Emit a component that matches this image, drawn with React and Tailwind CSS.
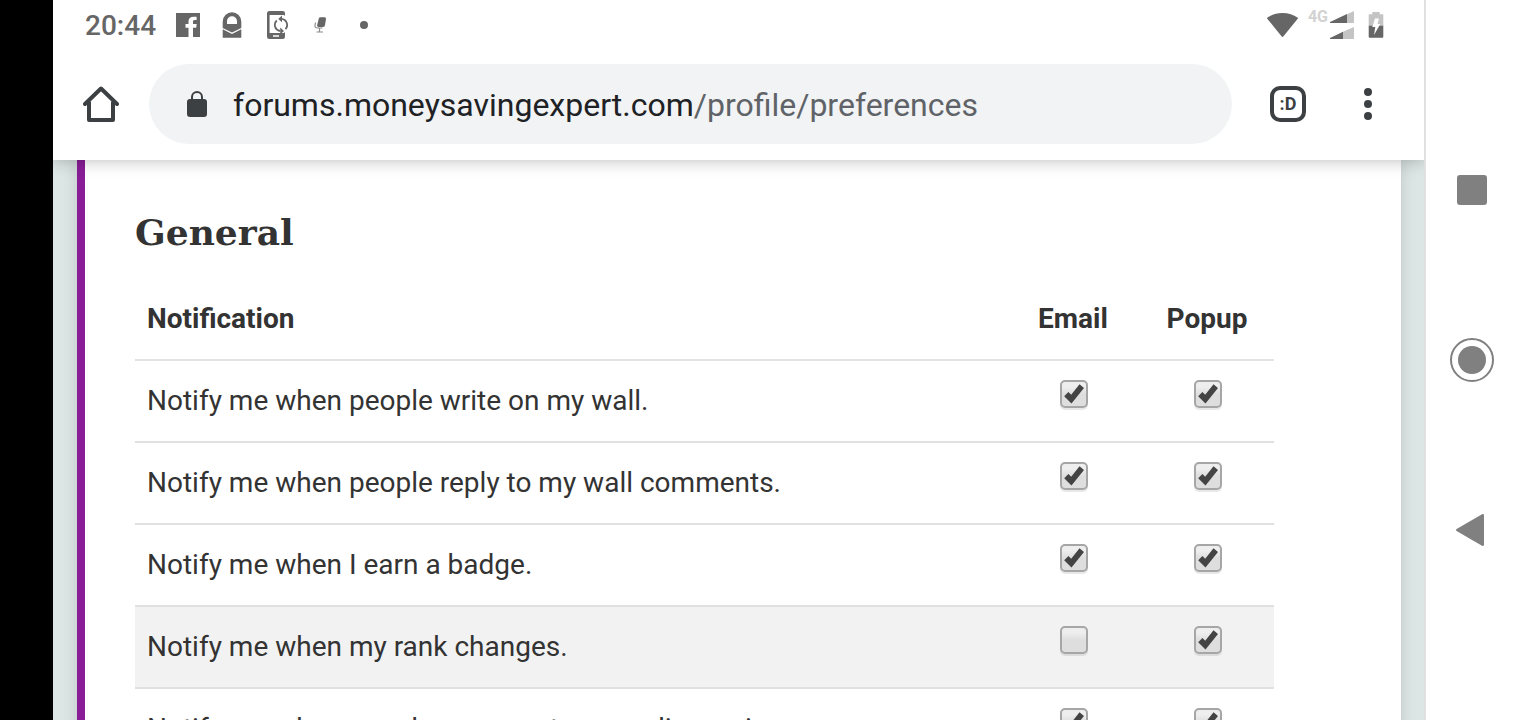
import { useState } from 'react';

const initialPreferences = [
    { id: 'wall-post', label: 'Notify me when people write on my wall.', email: true, popup: true },
    { id: 'wall-reply', label: 'Notify me when people reply to my wall comments.', email: true, popup: true },
    { id: 'badge', label: 'Notify me when I earn a badge.', email: true, popup: true },
    { id: 'rank', label: 'Notify me when my rank changes.', email: false, popup: true, highlighted: true },
    { id: 'discussion', label: 'Notify me when people comment on my discussions.', email: true, popup: true },
];

const StatusBar = () => (
    <div className="flex h-12 items-center justify-between pl-8 pr-9 text-[#666666]">
        <div className="flex items-center gap-5 pt-0.5">
            <span className="w-[71px] pt-0.5 text-[28px] leading-8 font-medium">20:44</span>

            {/* Facebook */}
            <svg className="h-6 w-6" viewBox="0 0 24 24" fill="currentColor">
                <path d="M0 0h24v24h-7v-9.200h3.200l.5-3.800H17V8.800c0-1.200.5-1.700 1.800-1.700h1.800V3.700h-2.800c-3.600 0-5.300 1.900-5.300 4.800V11H9.500v3.800h3V24H0z" />
            </svg>

            {/* Mail lock */}
            <svg className="h-[26px] w-6" viewBox="0 0 24 26" fill="currentColor">
                <path fillRule="evenodd" d="M2.700 9.500a9.300 9.300 0 0 1 18.600 0v6.500L12 20.500l-9.300-4.500zM7 12h10V9.300a5 5 0 0 0-10 0z" />
                <path d="M2.700 17.300l9.300 4.700 9.300-4.700v7.900q0 .6-.6.600H3.300q-.6 0-.6-.6z" />
            </svg>

            {/* Phone sync */}
            <svg className="h-7 w-6" viewBox="0 0 24 28" fill="none">
                <path fill="currentColor" fillRule="evenodd" d="M5.500 0h13A2.500 2.500 0 0 1 21 2.500V5l-1-1H5.600v18H20l1-1v4.500a2.500 2.500 0 0 1-2.500 2.500h-13A2.500 2.500 0 0 1 3 25.500v-23A2.500 2.500 0 0 1 5.500 0zM9 24.200v1.500h6v-1.500z" />
                <path stroke="currentColor" strokeWidth="1.800" d="M16 20A6.100 6.100 0 0 1 12.800 9.500M17.500 7.900a6.100 6.100 0 0 1 4 10.200" />
                <path fill="currentColor" d="M18 4.600v6.600L14.200 7.900zM16.200 16.600v6.600l3.800-3.300z" />
            </svg>

            {/* Microphone */}
            <svg className="h-4 w-6" viewBox="0 0 24 16" fill="none">
                <path fill="currentColor" d="M10.800 1.500Q11 .2 12.500.200h4.200q1.500 0 1.300 1.500l-1 6.600q-.3 1.700-2 1.700h-4.500q-1.700 0-1.400-1.700z" />
                <path stroke="currentColor" strokeWidth="1.200" d="M7.500 5.500l-.5 3q-.2 2.500 2.500 2.500h5M11.500 10.500V15M8.500 15h6.500" opacity=".75" />
            </svg>

            <span className="flex w-6 justify-center">
                <span className="h-2 w-2 rounded-full bg-[#666666]" />
            </span>
        </div>

        <div className="flex items-center gap-2.5 pt-0.5">
            {/* Wifi */}
            <svg className="h-6 w-[31px]" viewBox="0 0 31 24" fill="currentColor">
                <path d="M15.500 0C21.500 0 26.500 1.800 30.500 4.600q.7.500.2 1.200L16.300 23.500q-.8.900-1.600 0L.3 5.800q-.5-.7.2-1.200C4.500 1.800 9.500 0 15.500 0z" />
            </svg>

            {/* Mobile signal, one wedge for each SIM */}
            <div className="flex gap-0.5">
                <span className="text-[16px] leading-3 font-bold text-[#d2d2d2]">4G</span>
                <svg className="h-7 w-6" viewBox="0 0 24 28">
                    <path fill="#c4c4c4" d="M17 3.200L24 0v12h-7zM13 20.800L24 16v12H13z" />
                    <path fill="#666666" d="M0 11L17 3v9H0zM0 27l13-6.200V28H0z" />
                </svg>
            </div>

            {/* Battery */}
            <svg className="h-[26px] w-6" viewBox="0 0 24 26">
                <path fill="#c4c4c4" d="M8.300 0h7.400v2.300h2.800q.8 0 .8.800V14H4.700V3.100q0-.8.800-.8h2.800z" />
                <path fill="#666666" d="M4.700 13.800h14.600v11q0 1-1 1H5.700q-1 0-1-1z" />
                <path fill="#ffffff" d="M11 6.500h4l-1.500 5.500h2.800L10 23l1.300-8H8.300z" />
            </svg>
        </div>
    </div>
);

const BrowserToolbar = () => (
    <div className="flex items-center py-4 pl-[30px] pr-[52px] text-[#3c4043]">
        <button aria-label="Home" className="mr-[30px] h-9 w-9 shrink-0">
            <svg className="h-9 w-9" viewBox="0 0 36 36" fill="none" stroke="currentColor" strokeWidth="4">
                <path strokeLinecap="round" strokeLinejoin="round" d="M2 18L18 2.500 34 18" />
                <path strokeLinejoin="round" d="M6 15.500V34h24V15.500" />
            </svg>
        </button>

        <button className="flex h-20 min-w-0 flex-1 items-center gap-[26px] rounded-full bg-[#f1f3f4] pl-[38px] text-left">
            <svg className="h-[26px] w-5 shrink-0" viewBox="0 0 20 26" fill="none">
                <rect y="8" width="20" height="18" rx="3" fill="currentColor" />
                <path stroke="currentColor" strokeWidth="2" d="M5 9V6a5 5 0 0 1 10 0v3" />
            </svg>
            <span className="truncate pt-0.5 text-[32px] leading-10 text-[#202124]">
                forums.moneysavingexpert.com<span className="text-[#5f6368]">/profile/preferences</span>
            </span>
        </button>

        <button aria-label="Open tabs" className="ml-[38px] flex h-9 w-9 shrink-0 items-center justify-center rounded-[10px] border-4 border-[#3c4043] text-[18px] leading-5 font-bold">
            :D
        </button>

        <button aria-label="Menu" className="ml-[58px] flex shrink-0 flex-col gap-1">
            <span className="h-2 w-2 rounded-full bg-[#3c4043]" />
            <span className="h-2 w-2 rounded-full bg-[#3c4043]" />
            <span className="h-2 w-2 rounded-full bg-[#3c4043]" />
        </button>
    </div>
);

const PreferenceCheckbox = ({ label, checked, onChange }) => (
    <span className="relative mx-auto block h-7 w-7">
        <input
            type="checkbox"
            aria-label={label}
            checked={checked}
            onChange={onChange}
            className="peer block h-7 w-7 appearance-none rounded-[5px] border-2 border-[#a6a6a6] bg-linear-to-b from-[#eeeeee] from-20% to-[#dedede] to-50% shadow-[0_2px_0_rgba(0,0,0,0.09)]"
        />
        <svg className="pointer-events-none absolute inset-0 hidden h-7 w-7 peer-checked:block" viewBox="0 0 28 28" fill="#444444">
            <path d="M19.500 4.300l4.500 3.700L11.500 23.500 4.200 16.200l4.200-4.200 2.800 2.800z" />
        </svg>
    </span>
);

const PreferencesTable = () => {
    const [preferences, setPreferences] = useState(initialPreferences);

    const toggle = (id, channel) => {
        setPreferences(preferences.map(p => (p.id === id ? { ...p, [channel]: !p[channel] } : p)));
    };

    return (
        <table className="w-full table-fixed border-collapse text-[28px] leading-10 text-[#333333]">
            <thead>
                <tr className="h-[82px] border-b-2 border-[#e3e3e3]">
                    <th className="px-3 text-left font-bold">Notification</th>
                    <th className="w-[134px] font-bold">Email</th>
                    <th className="w-[134px] font-bold">Popup</th>
                </tr>
            </thead>
            <tbody>
                {preferences.map(p => (
                    <tr key={p.id} className={`h-[82px] border-b-2 border-[#e0e0e0] ${p.highlighted ? 'bg-[#f2f2f2]' : ''}`}>
                        <td className="px-3">{p.label}</td>
                        <td className="pl-0.5 pt-[19px] align-top">
                            <PreferenceCheckbox label={`Email: ${p.label}`} checked={p.email} onChange={() => toggle(p.id, 'email')} />
                        </td>
                        <td className="pl-0.5 pt-[19px] align-top">
                            <PreferenceCheckbox label={`Popup: ${p.label}`} checked={p.popup} onChange={() => toggle(p.id, 'popup')} />
                        </td>
                    </tr>
                ))}
            </tbody>
        </table>
    );
};

const SystemNav = () => (
    <nav className="flex w-24 shrink-0 flex-col items-center justify-center gap-[122px] border-l-2 border-[#e0e0e0] bg-white pr-0.5 text-[#808080]">
        <button aria-label="Recent apps" className="flex h-12 w-12 items-center justify-center">
            <span className="h-[30px] w-[30px] rounded-[3px] bg-[#808080]" />
        </button>
        <button aria-label="Home screen" className="flex h-12 w-12 items-center justify-center">
            <span className="flex h-11 w-11 items-center justify-center rounded-full border-2 border-[#808080]">
                <span className="h-7 w-7 rounded-full bg-[#808080]" />
            </span>
        </button>
        <button aria-label="Back" className="flex h-12 w-12 items-center justify-center">
            <svg className="h-8 w-8" viewBox="0 0 32 32" fill="currentColor">
                <path d="M.6 15L26 .3q2-.8 2 1.200v29q0 2-2 1.200L.6 17q-1.200-1 0-2z" />
            </svg>
        </button>
    </nav>
);

const App = () => (
    <div className="flex h-screen overflow-hidden bg-white font-['Roboto',sans-serif]">
        <div className="w-[53px] shrink-0 bg-black" />

        <div className="flex min-w-0 flex-1 flex-col overflow-hidden">
            <header className="relative z-10 shrink-0 bg-white shadow-[0_0_16px_rgba(0,0,0,0.28)]">
                <StatusBar />
                <BrowserToolbar />
            </header>

            <main className="flex-1 overflow-hidden bg-[#dce6e4] pl-6 pr-[23px]">
                <section className="min-h-full border-l-8 border-[#881d97] bg-white pl-[50px] pr-[127px] pt-12 shadow-[0_0_14px_rgba(0,0,0,0.14)]">
                    <h2 className="mb-[22px] font-['DejaVu_Serif',serif] text-[36px] leading-12 font-bold text-[#333333]">General</h2>
                    <PreferencesTable />
                </section>
            </main>
        </div>

        <SystemNav />
    </div>
);

export default App;
